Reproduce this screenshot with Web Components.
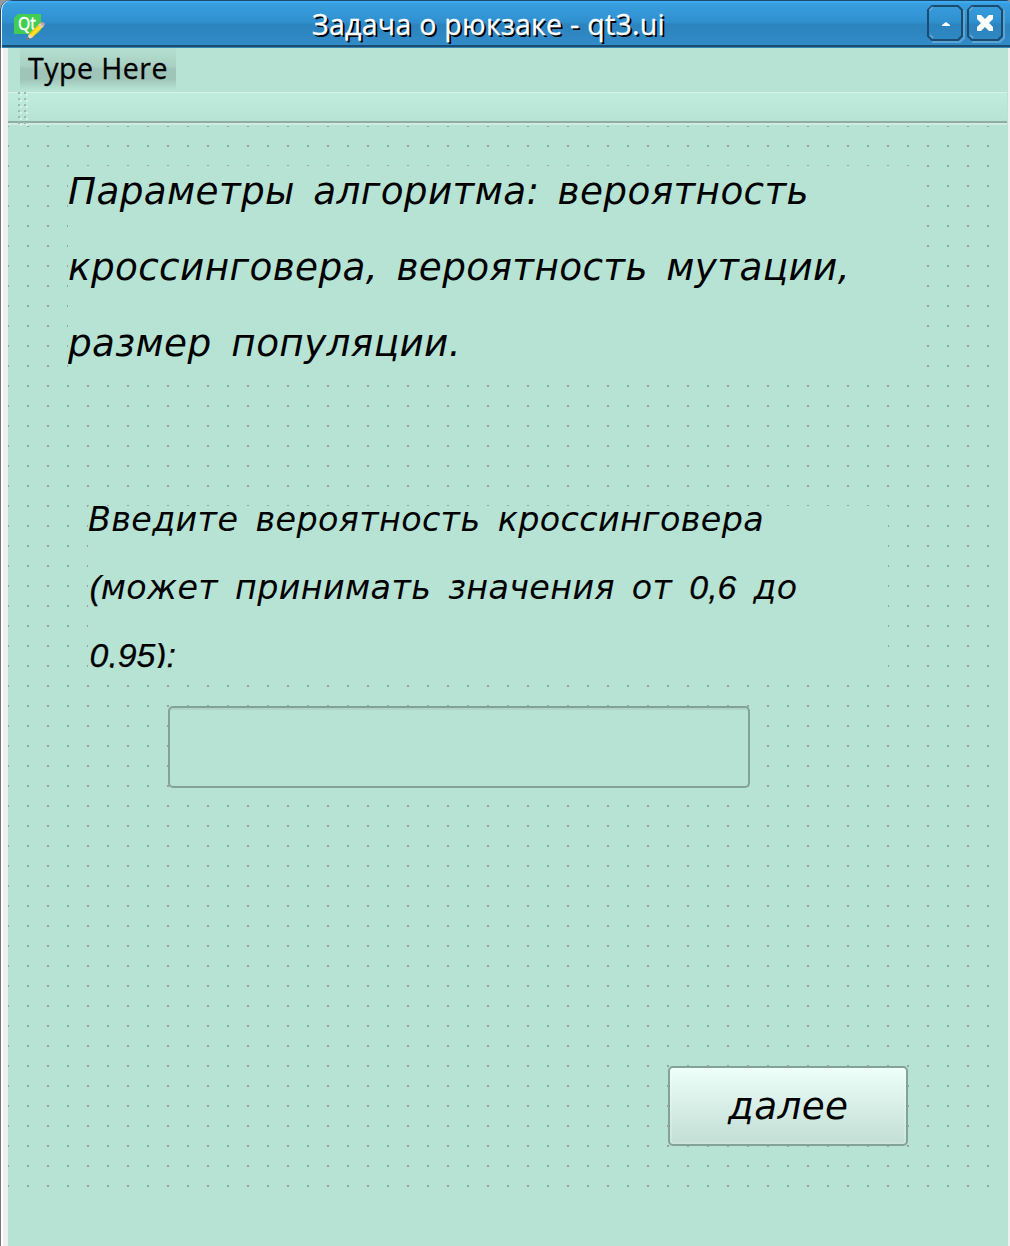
<!DOCTYPE html>
<html lang="ru">
<head>
<meta charset="utf-8">
<title>Задача о рюкзаке - qt3.ui</title>
<style>
html,body{margin:0;height:100%}
body{background:#b7e3d4;overflow:hidden}
</style>
</head>
<body>
<designer-window></designer-window>
<script>
// Single line of text whose spacing is stretched to a given advance width.
// mode="word" spreads the difference over the spaces, otherwise over letters.
class FitText extends HTMLElement{
  connectedCallback(){
    const root=this.attachShadow({mode:'open'});
    root.innerHTML='<style>:host{display:block;white-space:nowrap}span{display:inline-block;white-space:pre}</style><span><slot></slot></span>';
    const span=root.querySelector('span');
    const host=this.getRootNode().host;
    const text=this.textContent||(host?host.textContent:''), target=+this.getAttribute('width');
    const word=this.getAttribute('mode')==='word';
    const count=word?text.split(' ').length-1:text.length;
    if(!count||!target)return;
    const diff=(target-span.getBoundingClientRect().width)/count;
    span.style[word?'wordSpacing':'letterSpacing']=diff.toFixed(3)+'px';
  }
}
class TitleBar extends HTMLElement{
  constructor(){
    super();
    this.attachShadow({mode:'open'}).innerHTML=`
<style>
:host{display:flex;box-sizing:border-box;height:48px;padding:3px 5px 0 14px;align-items:flex-start;
 background:linear-gradient(#1c4c70 0 1px,#3daaf0 1px 3px,#389fe0 3px,#3090cf 22px,#2c83bd 25px,#318bc7 45px,#1b4b6e 45px 47px,#3485b8 47px);
 box-shadow:inset 1px 0 #1c4c70,inset 2px 0 #eef6fb;
 border-radius:10px 4px 0 0}
.logo{margin-top:10px;flex:none}
.title{flex:1;display:flex;justify-content:flex-start;padding-left:267px;color:#fff;
 font:28.5px/42px "Open Sans","Noto Sans",sans-serif;text-shadow:2px 2px 0 #000;-webkit-text-stroke:.3px #fff}
.btns{display:flex;gap:2px;margin-top:1px}
svg{display:block}
</style>
<svg class="logo" width="31" height="27" viewBox="0 0 31 27">
 <path d="M4 1H27V17L23 21H0V5Z" fill="#41cd52"/>
 <text x="4" y="16.5" font-family="Noto Sans,sans-serif" font-size="17.5" textLength="18" lengthAdjust="spacingAndGlyphs" fill="#fff" stroke="#fff" stroke-width=".4">Qt</text>
 <path d="M13 27L15 21L26 10L30 13L19 24Z" fill="#f6c20d"/>
 <path d="M16 22L26 12L28 14L18 24Z" fill="#ffe12e"/>
 <path d="M13 27L15 21L19 24Z" fill="#e9d9c4"/><path d="M13 27L14 24L16 26Z" fill="#555"/>
 <path d="M24 12L28 9L31 11L28 15Z" fill="#d5cfd0"/><path d="M26 10L28 9L31 11L29 13Z" fill="#c99"/>
</svg>
<div class="title"><fit-text width="353">Задача о рюкзаке - qt3.ui</fit-text></div>
<div class="btns">
 <svg width="38" height="40" viewBox="0 0 38 40"><path d="M5 38H33L37 34V6" fill="none" stroke="#5ba3d3" stroke-width="2"/><path d="M5 2H31L35 6V32L31 36H5L1 32V6Z" fill="none" stroke="#1b4c70" stroke-width="2"/><path d="M3 7V6L6 3M3 31L6 34" fill="none" stroke="#5ba3d3" stroke-width="2"/><path d="M15 22V21L19 18L23 21V22Z" fill="#fff"/></svg>
 <svg width="38" height="40" viewBox="0 0 38 40"><path d="M5 38H33L37 34V6" fill="none" stroke="#5ba3d3" stroke-width="2"/><path d="M5 2H31L35 6V32L31 36H5L1 32V6Z" fill="none" stroke="#1b4c70" stroke-width="2"/><path d="M3 7V6L6 3M3 31L6 34" fill="none" stroke="#5ba3d3" stroke-width="2"/><path d="M10 11H14L18 15L22 11H26V15L22 19L26 23V27H22L18 23L14 27H10V23L14 19L10 15Z" fill="#fff"/></svg>
</div>`;
  }
}
class MenuBar extends HTMLElement{
  constructor(){
    super();
    this.attachShadow({mode:'open'}).innerHTML=`
<style>
:host{display:flex;height:44px;padding-left:12px}
.item{box-sizing:border-box;width:156px;height:42px;padding-left:8px;color:#000;font:28.5px/40px "Open Sans","Noto Sans",sans-serif;-webkit-text-stroke:.3px #000;
 background:linear-gradient(#b4dfd0,#a9d1c3 18px,#9fc5b8 21px,#9fc5b8 31px,#b7e3d4)}
</style><div class="item"><fit-text width="140"><slot></slot></fit-text></div>`;
  }
}
class ToolStrip extends HTMLElement{
  constructor(){
    super();
    this.attachShadow({mode:'open'}).innerHTML=`
<style>
:host{display:block;height:34px;margin-right:1px;
 background:linear-gradient(#d7f1e7 0 1px,#c0ecdd 1px,#b7e3d4 29px,#8fada3 29px 31px,#d0ebe2 31px 33px,#b7e3d4 33px)}
i{display:block;width:12px;height:34px;margin-left:10px;
 background:conic-gradient(at 2px 2px,transparent 75%,#9dbab0 0) 0 0/6px 6px,
  conic-gradient(at 2px 2px,transparent 75%,#d6f2e8 0) 2px 2px/6px 6px}
</style><i></i>`;
  }
}
class FormLabel extends HTMLElement{
  constructor(){
    super();
    this.attachShadow({mode:'open'}).innerHTML=`
<style>:host{display:block;clip-path:inset(-8px 0 0 0);background:#b7e3d4;color:#000;font-style:italic;
 font-family:"DejaVu Sans",sans-serif}</style><slot></slot>`;
  }
}
class LineEdit extends HTMLElement{
  constructor(){
    super();
    this.attachShadow({mode:'open'}).innerHTML=`
<style>:host{display:block;box-sizing:border-box;width:582px;height:82px;border:2px solid #84a398;border-radius:5px;
 background:#b7e3d4;box-shadow:inset 0 2px #aed5c8}</style>`;
  }
}
class PushButton extends HTMLElement{
  constructor(){
    super();
    this.attachShadow({mode:'open'}).innerHTML=`
<style>:host{display:block;box-sizing:border-box;width:240px;height:80px;padding-left:58px;border:2px solid #84a398;border-radius:5px;
 background:linear-gradient(#edfff9,#c2ded4);box-shadow:inset 0 0 0 2px rgba(255,255,255,.18);
 color:#000;font:italic 37.33px/76px "DejaVu Sans",sans-serif;letter-spacing:.4px}</style><slot></slot>`;
  }
}
class DesignerWindow extends HTMLElement{
  constructor(){
    super();
    this.attachShadow({mode:'open'}).innerHTML=`
<style>
:host{display:flex;flex-direction:column;width:1010px;height:1246px;background:linear-gradient(#999 12px,#b7e3d4 12px)}
.body{flex:1;border-left:5px solid #efefef;border-right:2px solid #efefef;background:#b7e3d4}
.frame{flex:1;display:flex;border-left:1px solid #777;background:#fff;padding-left:2px}
.grid{display:flex;flex-direction:column;align-items:flex-start;width:999px;height:1070px;
 background:conic-gradient(at 2px 2px,transparent 75%,#9f9f9f 0) -1px -1px/20px 20px}
.one{width:858px;height:218px;margin:40px 0 0 60px;font-size:37.33px;line-height:76px;letter-spacing:.38px}
.one fit-text:first-child{line-height:50px;margin-bottom:13px}
.two{width:800px;height:162px;margin:122px 0 0 80px;font-size:33.33px;line-height:68px;letter-spacing:.38px}
.two fit-text:first-child{line-height:28px;margin-bottom:20px}
.n{font-family:"Liberation Sans",sans-serif;font-size:33.8px;line-height:1;letter-spacing:0;-webkit-text-stroke:.25px #000}
.in{padding-left:1.5px}
line-edit{margin:38px 0 0 160px}
push-button{margin:278px 0 0 660px}
</style>
<title-bar></title-bar>
<div class="frame"><div class="body">
<menu-bar>Type Here</menu-bar>
<tool-strip></tool-strip>
<div class="grid">
<form-label class="one"><fit-text mode="word" width="741">Параметры алгоритма: вероятность</fit-text><fit-text mode="word" width="782">кроссинговера, вероятность мутации,</fit-text><fit-text mode="word" width="393">размер популяции.</fit-text></form-label>
<form-label class="two"><fit-text mode="word" width="676">Введите вероятность кроссинговера</fit-text><fit-text class="in" mode="word" width="708"><span class="n">(</span>может принимать значения от <span class="n">0,6</span> до</fit-text><fit-text class="in"><span class="n">0,95):</span></fit-text></form-label>
<line-edit></line-edit>
<push-button>далее</push-button>
</div>
</div></div>`;
  }
}
customElements.define('fit-text',FitText);
customElements.define('title-bar',TitleBar);
customElements.define('menu-bar',MenuBar);
customElements.define('tool-strip',ToolStrip);
customElements.define('form-label',FormLabel);
customElements.define('line-edit',LineEdit);
customElements.define('push-button',PushButton);
customElements.define('designer-window',DesignerWindow);
</script>
</body>
</html>
